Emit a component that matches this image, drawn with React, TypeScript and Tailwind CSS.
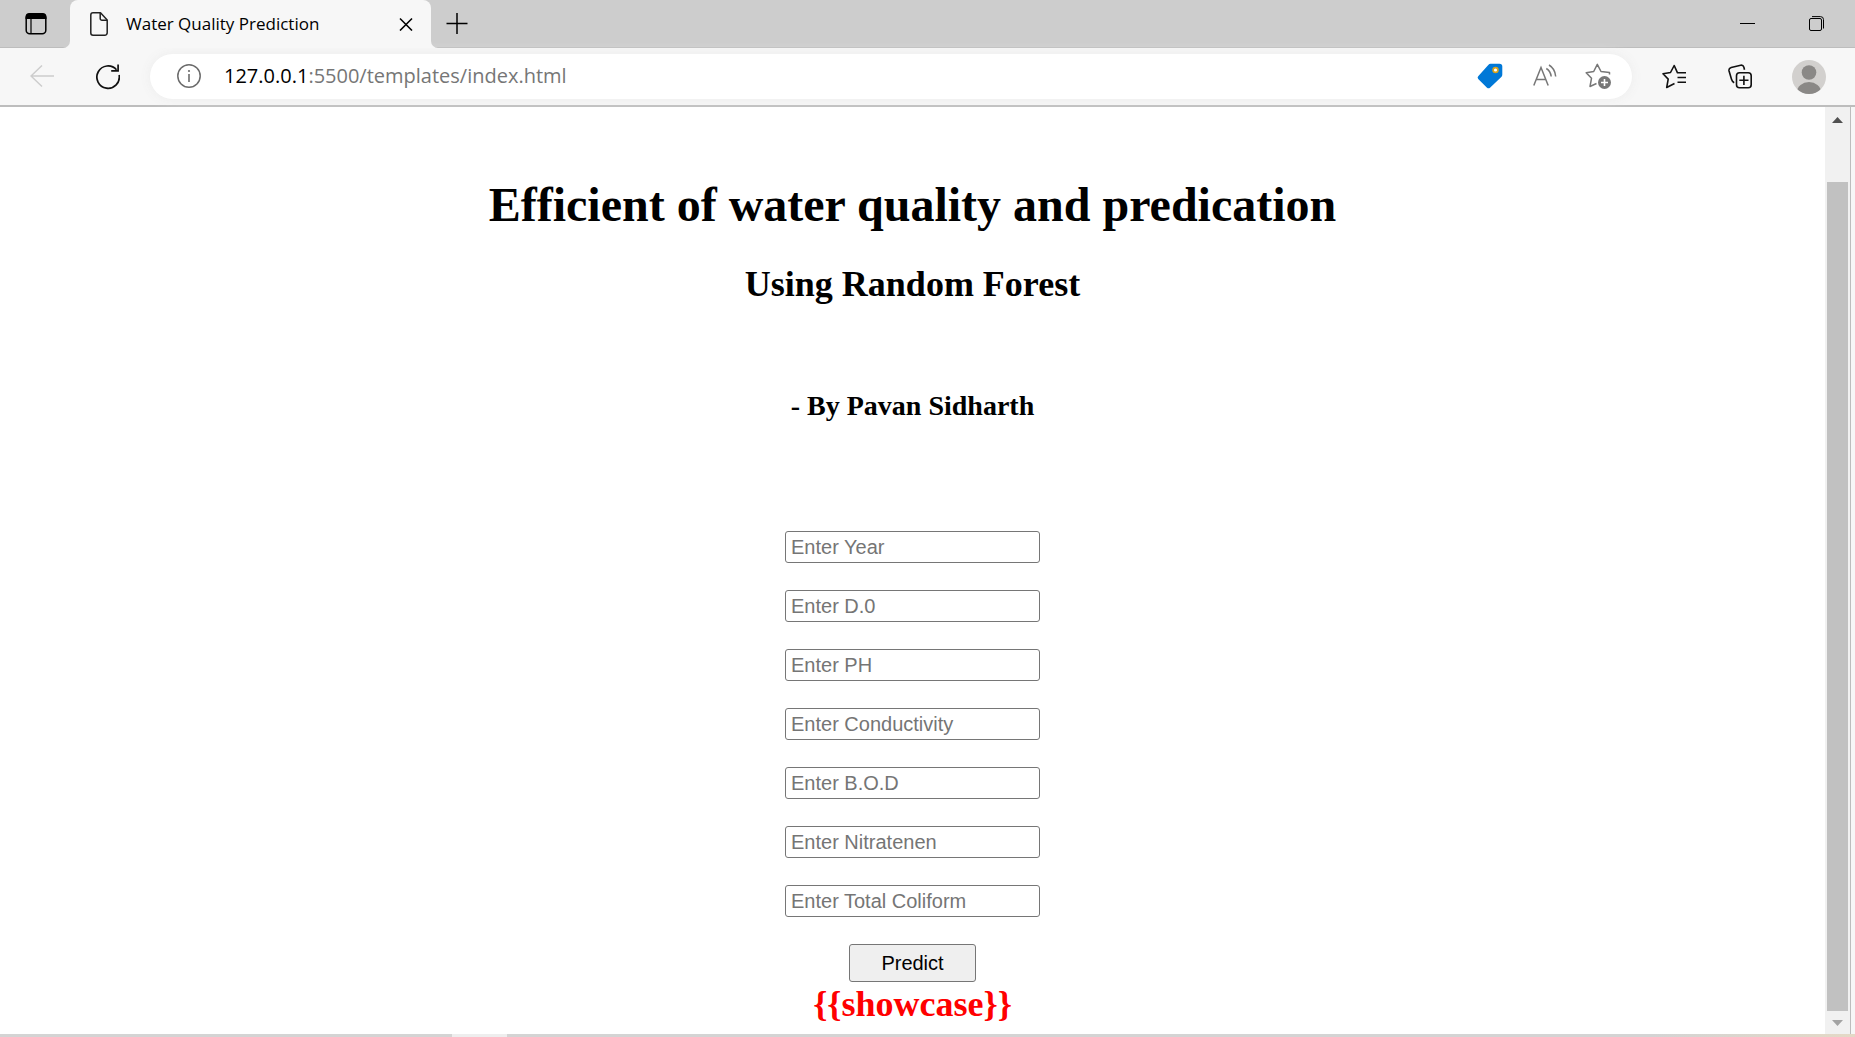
const FIELDS = [
  "Enter Year",
  "Enter D.0",
  "Enter PH",
  "Enter Conductivity",
  "Enter B.O.D",
  "Enter Nitratenen",
  "Enter Total Coliform",
];

function TabStrip() {
  return (
    <div className="flex h-12 items-center bg-[#cdcdcd] shadow-[inset_0_-1px_0_#bdbdbd]">
      <button aria-label="Tab actions" className="ml-6 shrink-0">
        <svg width="24" height="24" viewBox="0 0 24 24" className="block">
          <rect x="2.2" y="2.2" width="19.6" height="19.6" rx="3.5" fill="none" stroke="#000" strokeWidth="1.5" />
          <path d="M1.5 7V5a4 4 0 0 1 4-4h13a4 4 0 0 1 4 4v2z" fill="#000" />
          <path d="M7 6.500V21.500" stroke="#000" strokeWidth="1.2" />
        </svg>
      </button>
      <div className="relative ml-[22px] flex h-12 w-[361px] shrink-0 items-center rounded-t-lg bg-[#f7f7f7] pr-[18px] pl-5">
        <svg width="7" height="7" viewBox="0 0 7 7" className="absolute bottom-0 -left-[7px]">
          <path d="M7 0A7 7 0 0 1 0 7H7z" fill="#f7f7f7" />
        </svg>
        <svg width="7" height="7" viewBox="0 0 7 7" className="absolute -right-[7px] bottom-0">
          <path d="M0 0A7 7 0 0 0 7 7H0z" fill="#f7f7f7" />
        </svg>
        <svg width="18" height="24" viewBox="0 0 18 24" fill="none" stroke="#222" strokeWidth="1.5" strokeLinejoin="round" className="shrink-0">
          <path d="M3 .8H10.500L17.200 8V20.500A2.500 2.500 0 0 1 14.700 23.200H3A2.200 2.200 0 0 1 .8 21V3A2.200 2.200 0 0 1 3 .8z" />
          <path d="M10.200 1V6.500A1.800 1.800 0 0 0 12 8.300H17" />
        </svg>
        <span className="ml-[18px] flex-1 font-['Open_Sans',sans-serif] text-[17px] leading-6 whitespace-nowrap text-black">
          Water Quality Prediction
        </span>
        <button aria-label="Close tab">
          <svg width="14" height="14" viewBox="0 0 14 14" stroke="#000" strokeWidth="1.600" className="block">
            <path d="M1 1.500L13 13.500M13 1.500L1 13.500" />
          </svg>
        </button>
      </div>
      <button aria-label="New tab" className="ml-[15px]">
        <svg width="22" height="22" viewBox="0 0 22 22" stroke="#000" strokeWidth="1.500" className="block">
          <path d="M11 0V21M.5 10.500H21.500" />
        </svg>
      </button>
      <div className="flex-1" />
      <button aria-label="Minimize" className="mr-[54px]">
        <svg width="15" height="16" viewBox="0 0 15 16" className="block">
          <path d="M0 7.500H15" stroke="#000" />
        </svg>
      </button>
      <button aria-label="Restore" className="mr-[31px]">
        <svg width="15" height="16" viewBox="0 0 15 16" fill="none" stroke="#000" className="block">
          <rect x=".5" y="2.500" width="12" height="12" rx="1.500" />
          <path d="M3 .6H11.500A3 3 0 0 1 14.500 3.600V12.500" />
        </svg>
      </button>
    </div>
  );
}

function Toolbar() {
  return (
    <div className="flex h-[59px] items-center border-b-2 border-[#bdbdbd] bg-[#f7f7f7] pr-[29px] pl-[30px]">
      <button aria-label="Back" className="mr-[42px]">
        <svg width="24" height="24" viewBox="0 0 24 24" fill="none" stroke="#cdcdcd" strokeWidth="1.500" className="block">
          <path d="M12 .5L1 11L12 21.500M1 11H24" />
        </svg>
      </button>
      <button aria-label="Refresh" className="mr-[30px]">
        <svg width="24" height="26" viewBox="0 0 24 26" fill="none" stroke="#111" strokeWidth="1.700" className="block">
          <path d="M23.100 11A11.200 11.200 0 1 1 20.500 5.700" />
          <path d="M22.100 .5V6.900H15.200" />
        </svg>
      </button>
      <div className="flex h-[45px] flex-1 items-center rounded-full bg-white pr-[21px] pb-px pl-[27px] shadow-[0_0_12px_#ececec]">
        <button aria-label="Site information">
          <svg width="24" height="24" viewBox="0 0 24 24" className="block">
            <circle cx="12" cy="12" r="11.200" fill="none" stroke="#6b6b6b" strokeWidth="1.500" />
            <path d="M12 10V18" stroke="#6b6b6b" strokeWidth="1.600" />
            <circle cx="12" cy="7" r="1.100" fill="#6b6b6b" />
          </svg>
        </button>
        <div className="ml-[23px] flex-1 font-['Open_Sans',sans-serif] text-[20px] leading-7 whitespace-nowrap text-[#767676]">
          <span className="text-black">127.0.0.1</span>:5500/templates/index.html
        </div>
        <button aria-label="Shopping" className="mr-[30px]">
          <svg width="26" height="26" viewBox="0 0 26 26" className="block">
            <path d="M13.500 .8H22.500A2.800 2.800 0 0 1 25.300 3.600V11.500Q25.300 13 24.300 14L13 24.700Q11.500 26 10 24.700L1.200 16Q0 14.500 1.200 13.200L11.500 1.700Q12.300 .8 13.500 .8z" fill="#0078d7" />
            <circle cx="18.500" cy="7" r="2.400" fill="#fff" stroke="#d8a31c" strokeWidth="1.700" />
          </svg>
        </button>
        <button aria-label="Read aloud" className="mr-7">
          <svg width="24" height="24" viewBox="0 0 24 24" fill="none" stroke="#777" strokeWidth="1.500" className="block">
            <path d="M.8 21.500L8 3.500L15.200 21.500M3.200 15.500H12.800" />
            <path d="M13.300 4.500Q17.500 7 18.200 12.500M16 1Q22 4.500 22.700 12.500" />
          </svg>
        </button>
        <button aria-label="Add to favorites">
          <svg width="26" height="26" viewBox="0 0 26 26" fill="none" stroke="#777" strokeWidth="1.500" strokeLinejoin="round" className="block">
            <path d="M24.500 11.500V9.500L16 8.500L12.300 1.300L8.700 8.500L1.200 9.800L6.500 15.300L5 23.500L11.500 20.500" />
            <circle cx="19.500" cy="19.500" r="6.500" fill="#777" stroke="none" />
            <path d="M19.500 16V23M16 19.500H23" stroke="#fff" strokeWidth="1.600" />
          </svg>
        </button>
      </div>
      <button aria-label="Favorites" className="ml-[30px]">
        <svg width="24" height="26" viewBox="0 0 24 26" fill="none" stroke="#111" strokeWidth="1.600" strokeLinejoin="round" className="block">
          <path d="M24 8.800H15.500L12.200 1.500L8.500 8.500L1 9.800L6.200 15.100L4.700 23.500L12.500 19.500" />
          <path d="M15.500 13.500H24M15.500 18.200H24" />
        </svg>
      </button>
      <button aria-label="Collections" className="mr-10 ml-[42px]">
        <svg width="24" height="26" viewBox="0 0 24 26" fill="none" stroke="#111" strokeWidth="1.600" className="block">
          <rect x="8.500" y="8.800" width="14.700" height="15" rx="3" />
          <path d="M15.900 11.700V20.900M11.300 16.300H20.500" />
          <path d="M16.500 5.700L15.900 3.200Q15.200 .9 12.700 1.200L3.200 3.400Q.6 4.200 1 6.700L3.500 15.200Q4.200 17.700 6.200 18.700" />
        </svg>
      </button>
      <button aria-label="Profile">
        <svg width="34" height="34" viewBox="0 0 34 34" className="block">
          <defs>
            <clipPath id="avatar">
              <circle cx="17" cy="17" r="17" />
            </clipPath>
          </defs>
          <g clipPath="url(#avatar)">
            <rect width="34" height="34" fill="#d2d0ce" />
            <circle cx="17" cy="12.500" r="7.300" fill="#8a8886" />
            <ellipse cx="17" cy="32" rx="12" ry="10" fill="#8a8886" />
          </g>
        </svg>
      </button>
    </div>
  );
}

function Scrollbar() {
  return (
    <div className="flex w-[26px] shrink-0 flex-col border-r border-[#bdbdbd] bg-[#f1f1f1] px-0.5">
      <button aria-label="Scroll up" className="flex h-[25px] items-center justify-center">
        <svg width="11" height="6" viewBox="0 0 11 6">
          <path d="M0 6L5.500 0L11 6z" fill="#505050" />
        </svg>
      </button>
      <div className="mt-[50px] w-[21px] flex-1 bg-[#c1c1c1]" />
      <button aria-label="Scroll down" className="flex h-[23px] items-center justify-center">
        <svg width="11" height="6" viewBox="0 0 11 6">
          <path d="M0 0L5.500 6L11 0z" fill="#a3a3a3" />
        </svg>
      </button>
    </div>
  );
}

export default function App() {
  return (
    <div className="flex min-h-screen flex-col bg-[#f7f7f7]">
      <TabStrip />
      <Toolbar />
      <div className="flex flex-1 pr-1">
        <main className="flex flex-1 flex-col items-center bg-white pt-[70px] font-['Liberation_Serif',serif] font-bold text-black">
          <h1 className="text-[48px] leading-[55px]">Efficient of water quality and predication</h1>
          <h2 className="mt-8 text-[36px] leading-[41px]">Using Random Forest</h2>
          <h3 className="mt-[85px] text-[28px] leading-8">- By Pavan Sidharth</h3>
          <form
            className="mt-[109px] flex flex-col items-center gap-[27px] font-['Liberation_Sans',sans-serif] text-[20px] leading-6 font-normal"
            onSubmit={(event) => event.preventDefault()}
          >
            {FIELDS.map((field) => (
              <input
                key={field}
                type="text"
                aria-label={field}
                placeholder={field}
                className="h-8 w-[255px] rounded-[3px] border border-[#767676] bg-white px-[5px] placeholder:text-[#757575]"
              />
            ))}
            <button type="submit" className="h-[38px] w-[127px] rounded-[3px] border border-[#767676] bg-[#efefef]">
              Predict
            </button>
          </form>
          <p className="mt-0.5 text-[36px] leading-[41px] text-[#ff0000]">{"{{showcase}}"}</p>
        </main>
        <Scrollbar />
      </div>
      <div className="flex h-[3px]">
        <div className="w-[452px] bg-[#d4d4d4]" />
        <div className="w-[55px] bg-[#eeeeee]" />
        <div className="flex-1 bg-linear-to-r from-[#d4d4d4] from-85% to-[#e4d9c6]" />
      </div>
    </div>
  );
}
